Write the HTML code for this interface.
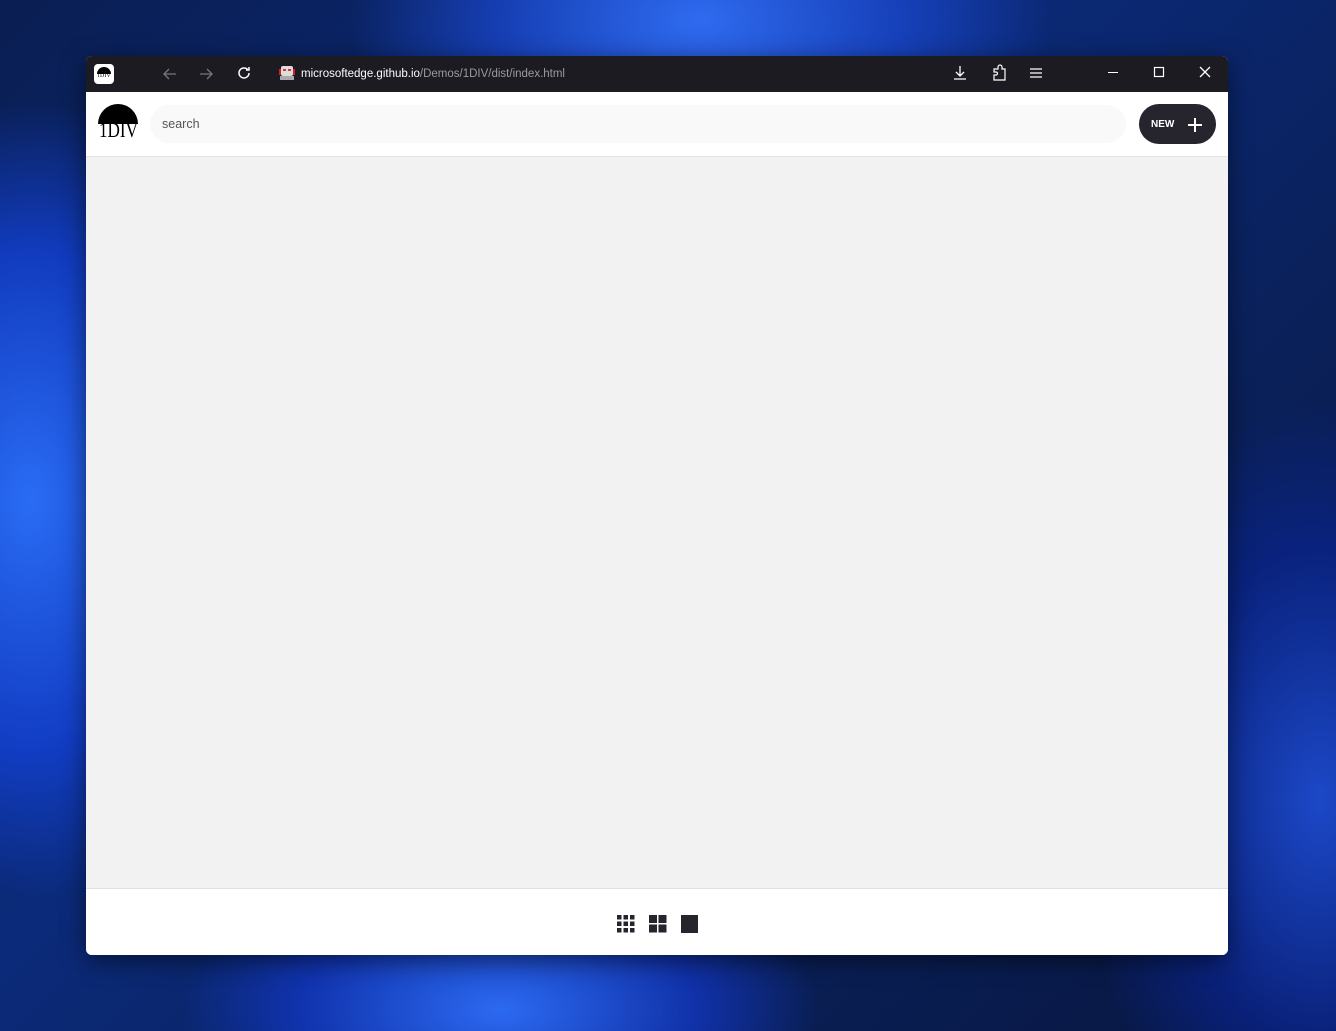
<!DOCTYPE html>
<html><head><meta charset="utf-8"><style>
*{margin:0;padding:0;box-sizing:border-box}
body{width:1336px;height:1031px;overflow:hidden;position:relative;font-family:"Liberation Sans",sans-serif;
background:
radial-gradient(ellipse 500px 300px at 700px 20px,#2f6bf0 0%,rgba(30,80,230,.6) 40%,transparent 70%),
radial-gradient(ellipse 300px 500px at 30px 500px,#2a6cf5 0%,rgba(20,70,230,.7) 50%,transparent 80%),
radial-gradient(ellipse 400px 200px at 500px 1010px,#2c6af2 0%,rgba(20,60,220,.6) 50%,transparent 80%),
radial-gradient(ellipse 300px 500px at 1320px 800px,#1c48c8 0%,rgba(10,40,170,.5) 50%,transparent 80%),
linear-gradient(135deg,#0a1e52 0%,#0b2a7a 40%,#0a2058 70%,#081640 100%);}
.win{position:absolute;left:86px;top:56px;width:1142px;height:899px;border-radius:6px;overflow:hidden;background:#fff;box-shadow:0 6px 24px rgba(0,0,0,.5)}
.tb{height:36px;background:#1c1b22;position:relative;color:#fff}
.tb svg{position:absolute}
.url{position:absolute;left:215px;top:11px;font-size:11.5px;color:#fbfbfe}
.url span{color:#9a9aa2}
.hdr{height:64px;position:relative;background:#fff}
.search{position:absolute;left:64px;top:13px;width:976px;height:38px;background:#f9f9f9;border-radius:19px;font-size:12.5px;color:#555;padding:12px 12px}
.new{position:absolute;left:1053px;top:12px;width:77px;height:40px;border-radius:20px;background:#26252e;color:#fff;font-weight:bold;font-size:10px}
.content{position:absolute;top:100px;left:0;width:1142px;height:733px;background:#f2f2f2;border-top:1px solid #e4e4e4;border-bottom:1px solid #e0e0e0}
.foot{position:absolute;top:834px;left:0;width:1142px;height:65px;background:#fff}
</style></head><body>
<div class="win">
 <div class="tb">
  <div style="position:absolute;left:8px;top:8px;width:20px;height:20px;background:#fff;border-radius:4px">
   <div style="position:absolute;left:3px;top:3px;width:14px;height:7px;background:#000;border-radius:7px 7px 0 0"></div>
   <div style="position:absolute;left:3px;top:9px;font-size:6px;color:#000;font-family:'Liberation Serif',serif">1DIV</div>
  </div>
  <svg style="left:76px;top:10px" width="16" height="16" viewBox="0 0 16 16" fill="none" stroke="#77767d" stroke-width="1.3"><path d="M14 8H2M7 3L2 8l5 5"/></svg>
  <svg style="left:112px;top:10px" width="16" height="16" viewBox="0 0 16 16" fill="none" stroke="#77767d" stroke-width="1.3"><path d="M2 8h12M9 3l5 5-5 5"/></svg>
  <svg style="left:150px;top:9px" width="16" height="16" viewBox="0 0 16 16" fill="none" stroke="#fff" stroke-width="1.5"><path d="M13 8a5 5 0 1 1-1.5-3.6M13 2v3h-3"/></svg>
  <svg style="left:193px;top:9px" width="16" height="16" viewBox="0 0 16 16"><rect x="2" y="1" width="12" height="10" rx="2" fill="#ddd"/><rect x="4" y="4" width="3" height="2" fill="#d33"/><rect x="9" y="4" width="3" height="2" fill="#d33"/><rect x="1" y="11" width="14" height="4" fill="#aaa"/><rect x="0" y="4" width="2" height="6" fill="#c22"/><rect x="14" y="4" width="2" height="6" fill="#c22"/></svg>
  <div class="url" style="top:12px">microsoftedge.github.io<span>/Demos/1DIV/dist/index.html</span></div>
  <svg style="left:866px;top:9px" width="16" height="16" viewBox="0 0 16 16" fill="none" stroke="#fff" stroke-width="1.3"><path d="M8 1v10M4 7l4 4 4-4M2 14h12"/></svg>
  <svg style="left:906px;top:8px" width="16" height="18" viewBox="0 0 16 18" fill="none" stroke="#fff" stroke-width="1.2"><path d="M2 16V11h2a1.5 1.5 0 0 0 0-3H2V5h4V3a2 2 0 0 1 4 0v2h3v11z"/></svg>
  <svg style="left:943px;top:10px" width="14" height="14" viewBox="0 0 14 14" stroke="#fff" stroke-width="1.3"><path d="M1 3h12M1 7h12M1 11h12"/></svg>
  <svg style="left:1021px;top:10px" width="12" height="12" stroke="#fff" stroke-width="1"><path d="M1 6.5h10"/></svg>
  <svg style="left:1067px;top:10px" width="12" height="12" fill="none" stroke="#fff" stroke-width="1.2"><rect x="1.5" y="1.5" width="9" height="9"/></svg>
  <svg style="left:1113px;top:10px" width="12" height="12" stroke="#fff" stroke-width="1.3"><path d="M1 1l10 10M11 1L1 11"/></svg>
 </div>
 <div class="hdr">
  <div style="position:absolute;left:12px;top:12px;width:40px;height:20px;background:#000;border-radius:20px 20px 0 0"></div>
  <div style="position:absolute;left:13px;top:26px;font-family:'Liberation Serif',serif;font-size:18px;color:#000;letter-spacing:0px;transform:scale(0.95,1.2);transform-origin:left top">1DIV</div>
  <div class="search">search</div>
  <div class="new"><span style="position:absolute;left:12px;top:15px">NEW</span>
   <svg style="position:absolute;left:49px;top:14px" width="14" height="14" stroke="#fff" stroke-width="2"><path d="M7 0v14M0 7h14"/></svg></div>
 </div>
 <div class="content"></div>
 <div class="foot">
  <svg style="position:absolute;left:531px;top:25px" width="18" height="18" fill="#26252e">
   <rect x="0" y="0" width="4.5" height="4.5"/><rect x="6.5" y="0" width="4.5" height="4.5"/><rect x="13" y="0" width="4.5" height="4.5"/>
   <rect x="0" y="6.5" width="4.5" height="4.5"/><rect x="6.5" y="6.5" width="4.5" height="4.5"/><rect x="13" y="6.5" width="4.5" height="4.5"/>
   <rect x="0" y="13" width="4.5" height="4.5"/><rect x="6.5" y="13" width="4.5" height="4.5"/><rect x="13" y="13" width="4.5" height="4.5"/></svg>
  <svg style="position:absolute;left:563px;top:25px" width="18" height="18" fill="#26252e">
   <rect x="0" y="0" width="8" height="8"/><rect x="9.5" y="0" width="8" height="8"/><rect x="0" y="9.5" width="8" height="8"/><rect x="9.5" y="9.5" width="8" height="8"/></svg>
  <div style="position:absolute;left:595px;top:25px;width:17px;height:18px;background:#26252e"></div>
 </div>
</div>
</body></html>
